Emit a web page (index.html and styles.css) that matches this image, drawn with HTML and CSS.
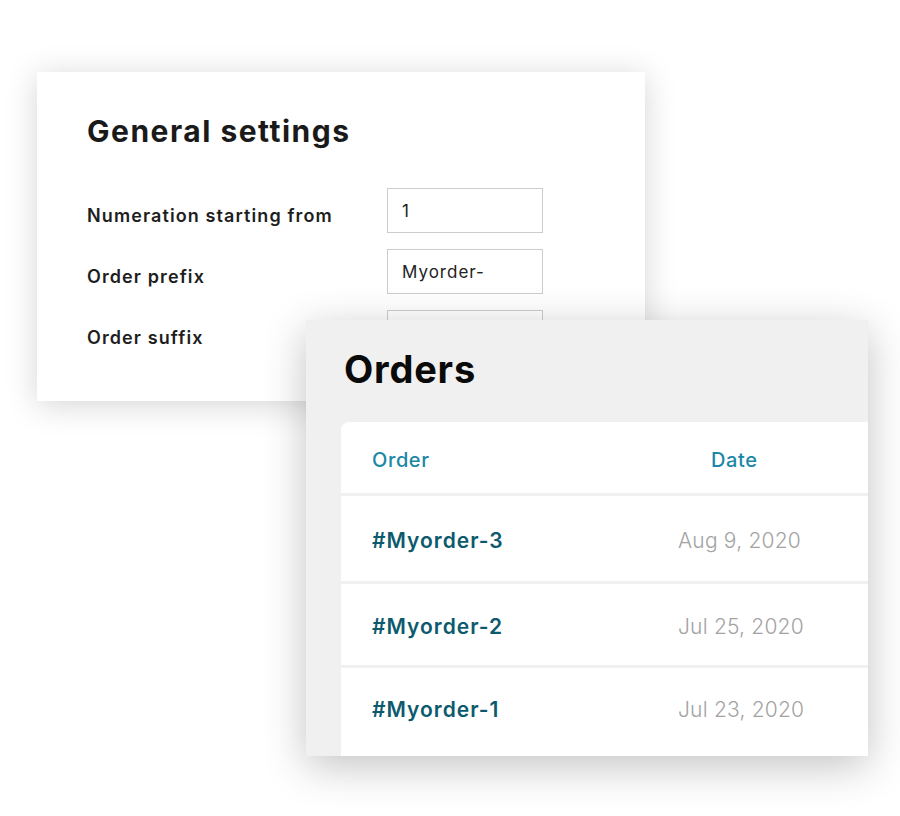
FILE: index.html
```html
<!DOCTYPE html>
<html lang="en">
<head>
<meta charset="utf-8">
<title>Settings and orders</title>
<link rel="stylesheet" href="styles.css">
</head>
<body>
<div class="stage">
  <section class="settings">
    <h1 class="settings-title">General settings</h1>
    <div class="field">
      <label class="field-label">Numeration starting from</label>
      <div class="field-input">1</div>
    </div>
    <div class="field">
      <label class="field-label">Order prefix</label>
      <div class="field-input">Myorder-</div>
    </div>
    <div class="field">
      <label class="field-label">Order suffix</label>
      <div class="field-input"></div>
    </div>
  </section>

  <section class="orders">
    <h2 class="orders-title">Orders</h2>
    <div class="table">
      <div class="row head">
        <div class="cell-order">Order</div>
        <div class="cell-date">Date</div>
      </div>
      <div class="row row-1">
        <div class="cell-order link">#Myorder-3</div>
        <div class="cell-date muted">Aug 9, 2020</div>
      </div>
      <div class="row row-2">
        <div class="cell-order link">#Myorder-2</div>
        <div class="cell-date muted">Jul 25, 2020</div>
      </div>
      <div class="row row-3">
        <div class="cell-order link">#Myorder-1</div>
        <div class="cell-date muted">Jul 23, 2020</div>
      </div>
    </div>
  </section>
</div>
</body>
</html>
```

FILE: styles.css
```css
* { box-sizing: border-box; }
html, body {
  margin: 0;
  padding: 0;
  background: #ffffff;
}
body {
  font-family: "Inter", "Open Sans", "Liberation Sans", sans-serif;
  color: #1c1c1c;
}
.stage {
  position: relative;
  width: 900px;
  height: 816px;
  padding: 72px 0 0 37px;
}

/* General settings window */
.settings {
  width: 608px;
  height: 329px;
  background: #ffffff;
  padding: 41px 50px 0 50px;
  box-shadow: 0 4px 30px rgba(0, 0, 0, 0.17);
}
.settings-title {
  margin: 0 0 39px 0;
  font-size: 30px;
  line-height: 36px;
  font-weight: 700;
  color: #1a1a1a;
  letter-spacing: 1.5px;
}
.field {
  display: grid;
  grid-template-columns: 300px 156px;
  align-items: center;
  height: 45px;
  margin-bottom: 16px;
}
.field-label {
  padding-top: 9px;
  font-size: 18px;
  font-weight: 600;
  letter-spacing: 1.1px;
  color: #1e1e1e;
}
.field-input {
  height: 45px;
  border: 1px solid #cccccc;
  padding: 1px 14px 0;
  font-size: 17px;
  line-height: 42px;
  letter-spacing: 1px;
  color: #222;
  background: #fff;
}

/* Orders window (overlaps the settings window) */
.orders {
  position: absolute;
  left: 306px;
  top: 320px;
  width: 562px;
  height: 436px;
  background: #f0f0f0;
  padding: 26px 0 0 35px;
  box-shadow: 0 10px 40px rgba(0, 0, 0, 0.24);
  overflow: hidden;
}
.orders-title {
  margin: 0 0 30px 3px;
  font-size: 38px;
  line-height: 46px;
  font-weight: 700;
  letter-spacing: 0.8px;
  color: #0a0a0a;
}
.table {
  display: flex;
  flex-direction: column;
  gap: 3px;
  border-top-left-radius: 8px;
  overflow: hidden;
  height: 334px;
}
.row {
  display: grid;
  grid-template-columns: 337px 1fr;
  align-items: center;
  padding-top: 4px;
  background: #ffffff;
  flex: none;
}
.row.head { height: 71px; }
.row-1 { height: 85px; }
.row-2 { height: 81px; }
.row-3 { flex: 1; padding-bottom: 10px; }
.cell-order {
  padding-left: 31px;
}
.head .cell-order,
.head .cell-date {
  font-size: 20px;
  font-weight: 500;
  letter-spacing: 0.6px;
  color: #1b87a6;
}
.head .cell-date {
  padding-left: 33px;
}
.link {
  font-size: 21px;
  font-weight: 600;
  letter-spacing: 1px;
  color: #0d5a6e;
}
.muted {
  font-size: 21px;
  font-weight: 300;
  letter-spacing: 0.2px;
  color: #a3a3a3;
}
```
